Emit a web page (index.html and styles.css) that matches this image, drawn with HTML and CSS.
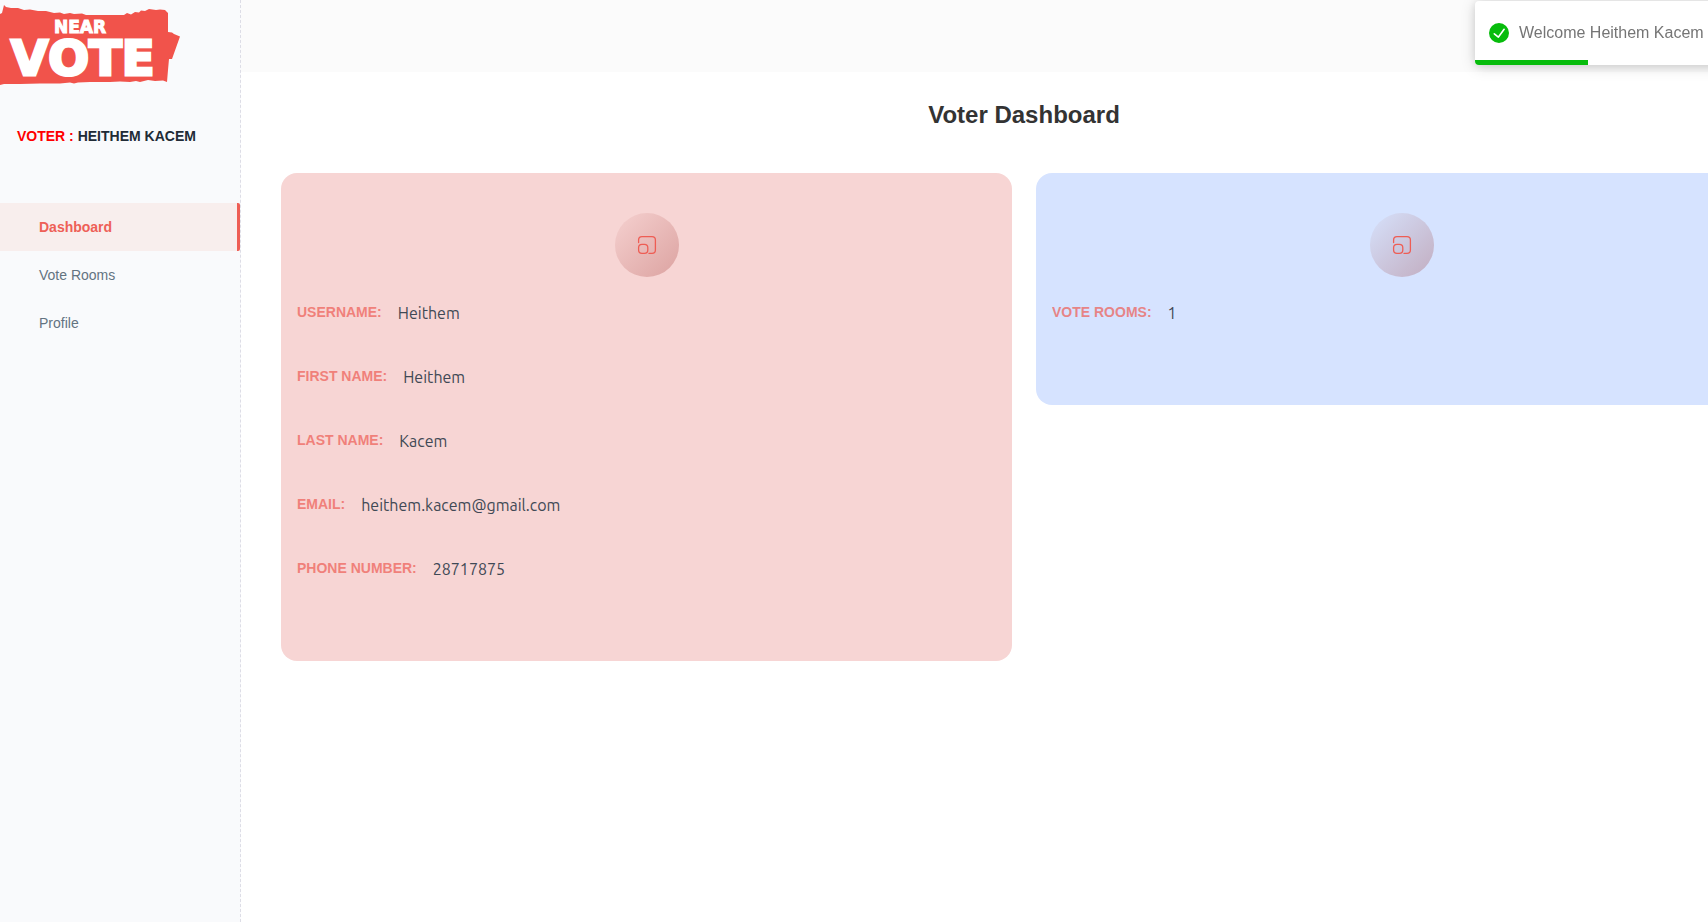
FILE: index.html
```html
<!DOCTYPE html>
<html lang="en">
<head>
<meta charset="utf-8">
<title>Voter Dashboard</title>
<link rel="stylesheet" href="styles.css">
</head>
<body>
<svg class="defs" aria-hidden="true">
  <symbol id="scale-icon" viewBox="0 0 24 24">
    <g fill="none" stroke="currentColor" stroke-width="1.3" stroke-linecap="round" stroke-linejoin="round">
      <path d="M3.6 9.6V7Q3.6 3.6 7 3.6H17Q20.4 3.6 20.4 7V17Q20.4 20.4 17 20.4H14"/>
      <rect x="3.6" y="11.4" width="9.2" height="9" rx="3.4"/>
    </g>
  </symbol>
</svg>
<div class="layout">
  <aside class="sidebar">
    <a class="logo" href="#" aria-label="Near Vote">
      <svg viewBox="0 0 180 86" width="180" height="86">
        <path fill="#f1534b" d="M0 14L2 13L4 5L6 7L11 8L18 8L24 10L30 9.500L38 11L46 11L54 13L60 12.500L64 14L70 13L74 14L82 13.500L86 15L104 15L124 15L127 13L131 14.500L135 12L139 12.500L141 10.500L145 11L149 9L156 10L160 9.500L165 10L168 13L168 32L172 32.500L174 34L180 36.500L172 59L169 59L168 70L167 82L163 80.500L155 81L148 80L140 82L136 81L130 82L120 81.500L110 82L90 82L78 82.500L74 83.500L70 82.500L60 83.500L40 83.500L20 84L4 84L0 85Z"/>
        <text class="logo-near" x="54" y="33">NEAR</text>
        <text class="logo-vote" x="11" y="75">VOTE</text>
      </svg>
    </a>
    <p class="voter"><span class="voter-role">VOTER :</span> HEITHEM KACEM</p>
    <nav class="menu">
      <a class="menu-item active" href="#">Dashboard</a>
      <a class="menu-item" href="#">Vote Rooms</a>
      <a class="menu-item" href="#">Profile</a>
    </nav>
  </aside>
  <div class="page">
    <header class="topbar"></header>
    <main class="content">
      <h1 class="title">Voter Dashboard</h1>
      <div class="cards">
        <section class="card card-red">
          <div class="badge badge-red"><svg width="24" height="24"><use href="#scale-icon"/></svg></div>
          <dl class="fields">
            <div class="field"><dt>USERNAME:</dt><dd>Heithem</dd></div>
            <div class="field"><dt>FIRST NAME:</dt><dd>Heithem</dd></div>
            <div class="field"><dt>LAST NAME:</dt><dd>Kacem</dd></div>
            <div class="field"><dt>EMAIL:</dt><dd>heithem.kacem@gmail.com</dd></div>
            <div class="field"><dt>PHONE NUMBER:</dt><dd>28717875</dd></div>
          </dl>
        </section>
        <section class="card card-blue">
          <div class="badge badge-blue"><svg width="24" height="24"><use href="#scale-icon"/></svg></div>
          <dl class="fields">
            <div class="field"><dt>VOTE ROOMS:</dt><dd>1</dd></div>
          </dl>
        </section>
      </div>
    </main>
  </div>
</div>
<div class="toast" role="alert">
  <svg width="20" height="20" viewBox="0 0 24 24"><path fill="#07bc0c" d="M12 0a12 12 0 1012 12A12.014 12.014 0 0012 0zm6.927 8.2l-6.845 9.289a1.011 1.011 0 01-1.43.188l-4.888-3.908a1 1 0 111.25-1.562l4.076 3.261 6.227-8.451a1 1 0 111.61 1.183z"/></svg>
  <span>Welcome Heithem Kacem</span>
  <div class="toast-progress"></div>
</div>
</body>
</html>
```
FILE: styles.css
```css
* { box-sizing: border-box; }
body {
  margin: 0;
  overflow-x: hidden;
  background: #fff;
  color: #212b36;
  font-family: "Liberation Sans", Arial, sans-serif;
}
.defs { position: absolute; width: 0; height: 0; }
.layout { display: flex; min-height: 100vh; overflow-x: hidden; }
.sidebar {
  flex: 0 0 241px;
  background: #f9fafc;
  border-right: 1px dashed #dddde6;
}
.logo { display: block; height: 86px; }
.logo svg { display: block; }
.logo text {
  fill: #fff;
  stroke: #fff;
  font-family: "DejaVu Sans", sans-serif;
  font-weight: 700;
  font-kerning: none;
}
.logo-near { font-size: 17px; stroke-width: 1px; }
.logo-vote { font-size: 48px; stroke-width: 3px; }
.voter {
  margin: 40px 0 56px;
  padding: 0 17px;
  font-size: 14px;
  font-weight: 700;
  line-height: 21px;
}
.voter-role { color: #f00; }
.menu { display: flex; flex-direction: column; }
.menu-item {
  height: 48px;
  padding: 0 39px;
  color: #637381;
  font-size: 14px;
  line-height: 48px;
  text-decoration: none;
}
.menu-item.active {
  background: #f8eeed;
  border-right: 3px solid #ee5d54;
  border-radius: 0 2px 2px 0;
  color: #ee6057;
  font-weight: 700;
}
.page { flex: 0 0 calc(100% - 142px); }
.topbar { height: 72px; background: #fbfbfb; }
.content { padding: 25px 40px; }
.title {
  margin: 0 0 40px;
  color: #333;
  font-size: 24px;
  line-height: 36px;
  text-align: center;
}
.cards {
  display: grid;
  grid-template-columns: 1fr 1fr;
  align-items: start;
  gap: 24px;
}
.card { padding: 40px 16px; border-radius: 16px; }
.card-red { background: #f7d5d4; }
.card-blue { background: #d6e3ff; }
.badge {
  display: flex;
  align-items: center;
  justify-content: center;
  width: 64px;
  height: 64px;
  margin: 0 auto 24px;
  border-radius: 50%;
  color: #ee5d54;
}
.badge-red { background: linear-gradient(135deg, #f5d0cf, #dca3a1); }
.badge-blue { background: linear-gradient(135deg, #d6e1fb, #c2adc0); }
.fields { margin: 0; }
.field { display: flex; gap: 16px; height: 64px; }
.field dt {
  color: #ee5d54;
  font-size: 14px;
  font-weight: 700;
  line-height: 22px;
  opacity: .7;
}
.field dd {
  margin: 0;
  color: #3f4955;
  font-family: Ubuntu, "Noto Sans", sans-serif;
  font-size: 16px;
  line-height: 24px;
}
.toast {
  position: fixed;
  top: 1px;
  left: calc(100% - 233px);
  display: flex;
  align-items: center;
  gap: 10px;
  width: 320px;
  height: 64px;
  padding: 0 14px;
  overflow: hidden;
  background: #fff;
  border-radius: 4px;
  box-shadow: 0 1px 10px rgba(0, 0, 0, .1), 0 2px 15px rgba(0, 0, 0, .15);
  color: #757575;
  font-size: 16px;
  line-height: 24px;
}
.toast-progress {
  position: absolute;
  bottom: 0;
  left: 0;
  width: 113px;
  height: 5px;
  background: #07bc0c;
}
```
